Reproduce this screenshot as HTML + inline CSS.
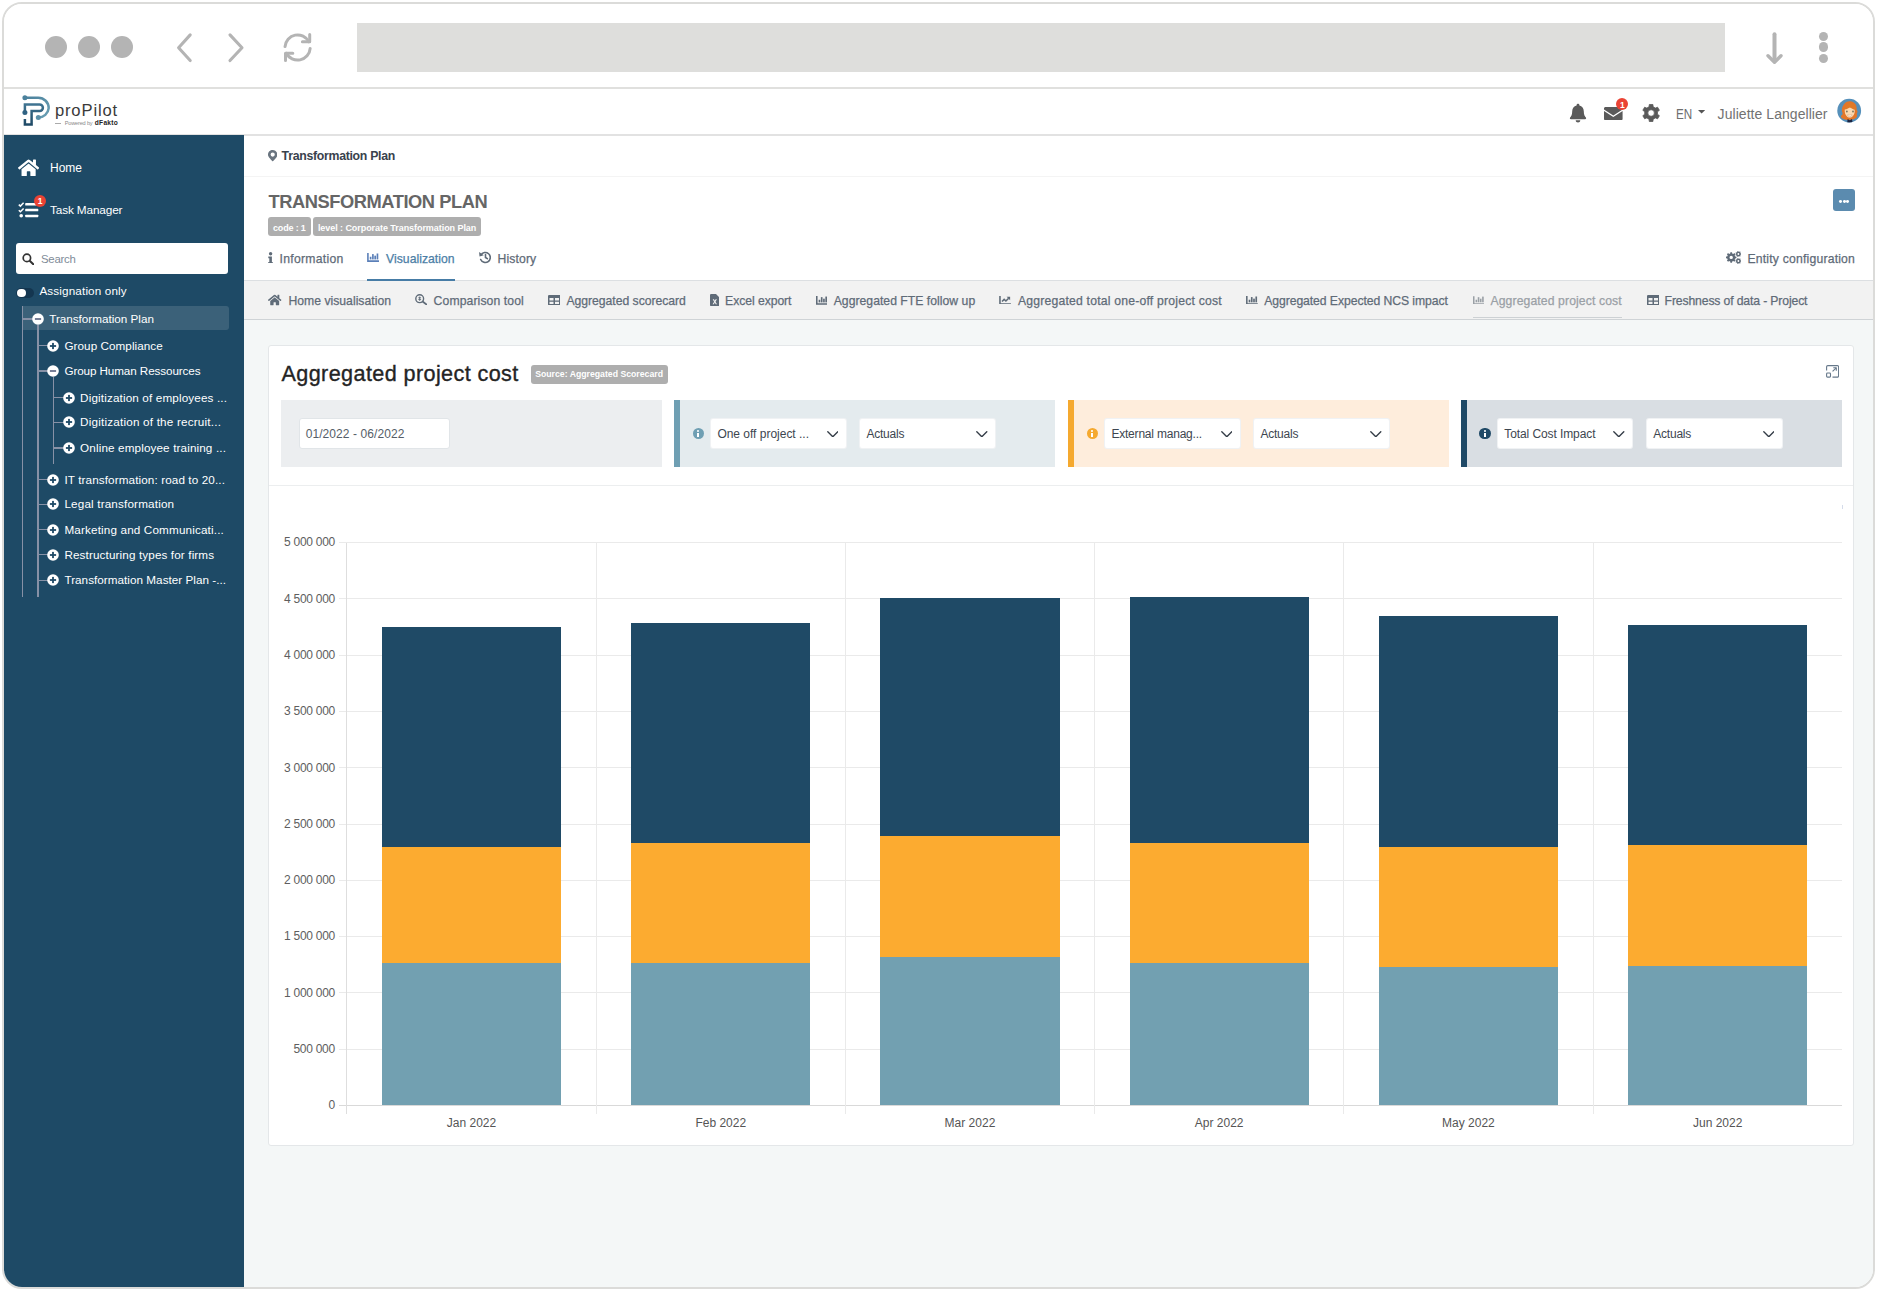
<!DOCTYPE html>
<html lang="en"><head><meta charset="utf-8"><title>proPilot - Aggregated project cost</title>
<style>
html,body{margin:0;padding:0;background:#fff;}
body{width:1879px;height:1293px;position:relative;overflow:hidden;font-family:"Liberation Sans", sans-serif;}
#f{position:absolute;left:2px;top:2px;width:1873px;height:1287px;box-sizing:border-box;border:2px solid #dbdbd9;border-radius:20px;overflow:hidden;background:#fff;}
#c{position:absolute;left:-4px;top:-4px;width:1879px;height:1293px;}
#c div,#c svg,#c span{position:absolute;display:block;}
#c span{white-space:nowrap;line-height:1;}
</style></head>
<body><div id="f"><div id="c">
<div style="left:0.00px;top:0.00px;width:1879.00px;height:87.00px;background:#fff"></div>
<div style="left:0.00px;top:87.00px;width:1879.00px;height:2.00px;background:#e0e0de"></div>
<div style="left:45.00px;top:36.00px;width:22.00px;height:22.00px;border-radius:50%;background:#b4b4b4"></div>
<div style="left:78.00px;top:36.00px;width:22.00px;height:22.00px;border-radius:50%;background:#b4b4b4"></div>
<div style="left:111.00px;top:36.00px;width:22.00px;height:22.00px;border-radius:50%;background:#b4b4b4"></div>
<svg style="left:170.00px;top:28.00px;" width="90.00" height="40.00" viewBox="170 28 90 40"><g fill="none" stroke="#b4b4b4" stroke-width="3.1" stroke-linecap="round" stroke-linejoin="round"><polyline points="190.2,34.9 178.6,47.7 190.2,60.5"/><polyline points="230,34.9 242,47.7 230,60.5"/></g></svg>
<svg style="left:278.00px;top:28.00px;" width="40.00" height="40.00" viewBox="278 28 40 40"><g fill="none" stroke="#b4b4b4" stroke-width="3" stroke-linecap="round" stroke-linejoin="round"><path d="M285.03 46.62 A12.6 12.6 0 0 1 308.83 41.78"/><polyline points="309.7,34.6 309.7,41.8 302.4,41.8"/><path d="M310.17 48.38 A12.6 12.6 0 0 1 286.37 53.22"/><polyline points="285.5,60.4 285.5,53.2 292.8,53.2"/></g></svg>
<div style="left:357.30px;top:23.00px;width:1367.70px;height:48.70px;background:#dededc"></div>
<svg style="left:1760.00px;top:28.00px;" width="30.00" height="40.00" viewBox="1760 28 30 40"><g fill="none" stroke="#b4b4b4" stroke-width="3.1" stroke-linecap="round" stroke-linejoin="round"><line x1="1774.5" y1="34.3" x2="1774.5" y2="61" stroke-width="4"/><polyline points="1768,55.8 1774.5,62.2 1781,55.8" stroke-width="3.4"/></g></svg>
<div style="left:1818.50px;top:31.50px;width:9.80px;height:9.80px;border-radius:50%;background:#b4b4b4"></div>
<div style="left:1818.50px;top:42.40px;width:9.80px;height:9.80px;border-radius:50%;background:#b4b4b4"></div>
<div style="left:1818.50px;top:53.50px;width:9.80px;height:9.80px;border-radius:50%;background:#b4b4b4"></div>
<div style="left:0.00px;top:89.00px;width:1879.00px;height:45.00px;background:#fff"></div>
<div style="left:0.00px;top:134.00px;width:1879.00px;height:1.60px;background:#e2e2e2"></div>
<svg style="left:20.00px;top:93.00px;" width="32.00" height="34.00" viewBox="20 93 32 34"><defs><linearGradient id="lg1" x1="0" y1="0" x2="0" y2="1"><stop offset="0" stop-color="#3f7391"/><stop offset="1" stop-color="#1f4a66"/></linearGradient><linearGradient id="lg2" x1="0" y1="0" x2="1" y2="1"><stop offset="0" stop-color="#4b819c"/><stop offset="1" stop-color="#6a9fb4"/></linearGradient></defs><g fill="none" stroke-width="2.5" stroke-linejoin="miter"><path d="M24.9 97.7 H38.3 A10.4 10.4 0 0 1 48.7 108.1 A10.4 10.4 0 0 1 38.3 117.5" stroke="url(#lg2)"/><path d="M24.9 112.4 V104.4 H39.6 A3.3 3.3 0 0 1 39.6 111 H31.6 V124.4 H24.9 V119" stroke="url(#lg1)"/></g><circle cx="24.9" cy="97.7" r="2.5" fill="#4b819c"/><circle cx="24.9" cy="112.4" r="2.5" fill="#2f6283"/><circle cx="38.3" cy="117.5" r="2.5" fill="#5a8fa8"/></svg>
<span id="t0" style="left:54.90px;top:102.50px;font-size:16.6px;color:#3a3a3a;font-weight:400;letter-spacing:0.862px;">proPilot</span>
<div style="left:54.60px;top:123.20px;width:6.70px;height:0.80px;background:#aaa"></div>
<span id="t1" style="left:64.80px;top:121.10px;font-size:5.6px;color:#8a8a8a;font-weight:400;letter-spacing:-0.194px;">Powered by</span>
<span id="t2" style="left:94.80px;top:120.10px;font-size:6.6px;color:#222;font-weight:700;letter-spacing:0.275px;">dFakto</span>
<svg style="left:1568.00px;top:103.00px;" width="20.00" height="21.00" viewBox="0 0 20 21"><path fill="#5a5a5a" d="M10 0.8c0.8 0 1.4 0.6 1.4 1.3v0.5c2.7 0.6 4.4 2.9 4.4 5.7 0 3.4 0.9 5 2.1 6.2 0.5 0.5 0.3 1.7-0.8 1.7H2.9c-1.1 0-1.3-1.2-0.8-1.7C3.3 13.3 4.2 11.700 4.200 8.300c0-2.800 1.700-5.100 4.400-5.700V2.100C8.600 1.400 9.200 0.800 10 0.800zM7.700 17.300h4.600c0 1.300-1 2.300-2.300 2.300s-2.300-1-2.300-2.300z"/></svg>
<svg style="left:1604.30px;top:106.60px;" width="18.60" height="13.40" viewBox="0 0 18.6 13.4"><path fill="#5a5a5a" d="M1.500 0h15.600c0.800 0 1.500 0.700 1.500 1.500v1.100L9.300 8.400 0 2.600V1.500C0 0.700 0.700 0 1.500 0zM0 4.100l9.300 5.800 9.300-5.800v7.800c0 0.800-0.700 1.500-1.500 1.500H1.500C0.700 13.400 0 12.700 0 11.900z"/></svg>
<div style="left:1616.20px;top:98.30px;width:12.20px;height:12.20px;border-radius:50%;background:#ea4334"></div>
<span id="t3" style="left:1622.30px;top:100.50px;font-size:8.5px;color:#fff;font-weight:700;transform:translateX(-50%);">1</span>
<svg style="left:1641.00px;top:103.00px;" width="20.00" height="20.00" viewBox="0 0 20 20"><path fill="#5a5a5a" fill-rule="evenodd" stroke="#5a5a5a" stroke-width="0.8" stroke-linejoin="round" d="M11.91 18.51 L8.29 18.51 L8.03 16.16 L5.80 14.88 L3.63 15.82 L1.83 12.69 L3.73 11.28 L3.73 8.72 L1.83 7.31 L3.63 4.18 L5.80 5.12 L8.03 3.84 L8.29 1.49 L11.91 1.49 L12.17 3.84 L14.40 5.12 L16.57 4.18 L18.37 7.31 L16.47 8.72 L16.47 11.28 L18.37 12.69 L16.57 15.82 L14.40 14.88 L12.17 16.16Z M13.40 10.00 A3.3 3.3 0 1 0 6.80 10.00 A3.3 3.3 0 1 0 13.40 10.00Z"/></svg>
<span id="t4" style="left:1676.10px;top:106.90px;font-size:14.2px;color:#6e6e6e;font-weight:400;transform-origin:0 0;transform:scaleX(0.823);">EN</span>
<svg style="left:1698.00px;top:110.10px;" width="7.20" height="3.60" viewBox="0 0 7.2 3.6"><path d="M0 0H7.2L3.6 3.6Z" fill="#555"/></svg>
<span id="t5" style="left:1717.60px;top:106.90px;font-size:14px;color:#727272;font-weight:400;letter-spacing:0.052px;">Juliette Langellier</span>
<svg style="left:1837.00px;top:98.00px;" width="25.00" height="25.00" viewBox="0 0 25 25"><defs><clipPath id="av"><circle cx="12.2" cy="12.7" r="11.9"/></clipPath></defs><circle cx="12.2" cy="12.7" r="11.9" fill="#5690ba"/><g clip-path="url(#av)"><path d="M7.600 5.400C9 3.800 11.200 3 13.200 3.200c2.200 0.200 4.300 1.300 5.300 3.100 1 1.700 1.300 3.700 1.200 5.600 0.700 0.600 1 1.500 0.700 2.400-0.200 0.700-0.700 1.200-0.600 1.900 0.100 0.800 0.500 1.500 0.200 2.300-0.400 1.200-1.600 2-2.800 2.600-2.800 1.200-6.200 1.300-9.200 0.500-1.300-0.400-2.800-0.900-3.700-2-0.500-0.700-0.500-1.600 0.100-2.200 0.500-0.500 1.100-0.900 1.200-1.600 0.200-1-0.600-1.900-0.700-2.900-0.300-2.600 0.700-5.500 2.700-7.500z" fill="#e2762a"/><path d="M8 10.500c2.200-1.200 6-1.400 9.500 0.200 0.500 2.200 0.300 4.500-0.800 6.300-0.900 1.500-2.300 2.800-4 2.800s-3-1.200-3.900-2.700c-1.100-1.900-1.400-4.500-0.800-6.600z" fill="#fbd9b0"/><path d="M7.500 11.500C8 8.500 9.800 6 12.800 5.300c2.500-0.500 4.800 1 5.500 3.400 0.300 1 0.200 2-0.100 3-2.100-0.200-4-1.100-5.300-2.700-0.600 1.200-2.800 2.300-5.400 2.500z" fill="#e07a28"/><path d="M10.200 24.800L10.600 21l2.200 1.300 2.200-1.300 0.500 3.800z" fill="#1c2441"/><path d="M10.600 16.800c1.400 0.500 3 0.500 4.400 0-0.400 1.300-1.300 2-2.200 2s-1.800-0.700-2.200-2z" fill="#fff" stroke="#c98a62" stroke-width="0.400"/><ellipse cx="9.900" cy="13.600" rx="0.650" ry="1" fill="#4b4a3c"/><ellipse cx="16" cy="13.600" rx="0.650" ry="1" fill="#4b4a3c"/></g></svg>
<div style="left:0.00px;top:135.30px;width:244.00px;height:1160.00px;background:#1e4a66"></div>
<svg style="left:18.00px;top:157.60px;" width="21.20" height="19.50" viewBox="0 0 576 512"><path fill="#fff" d="M280.37 148.26L96 300.11V464a16 16 0 0 0 16 16l112.06-.29a16 16 0 0 0 15.920-16V368a16 16 0 0 1 16-16h64a16 16 0 0 1 16 16v95.640a16 16 0 0 0 16 16.050L464 480a16 16 0 0 0 16-16V300L295.670 148.260a12.190 12.190 0 0 0-15.300 0zM571.600 251.470L488 182.560V44.050a12 12 0 0 0-12-12h-56a12 12 0 0 0-12 12v72.610L318.470 43a48 48 0 0 0-61 0L4.340 251.470a12 12 0 0 0-1.600 16.900l25.500 31A12 12 0 0 0 45.150 301l235.220-193.740a12.190 12.190 0 0 1 15.300 0L530.900 301a12 12 0 0 0 16.900-1.600l25.500-31a12 12 0 0 0-1.700-16.930z"/></svg>
<span id="t6" style="left:50.10px;top:162.10px;font-size:12px;color:#fff;font-weight:400;letter-spacing:-0.039px;">Home</span>
<svg style="left:18.40px;top:200.50px;" width="21.00" height="17.00" viewBox="0 0 21 17"><g fill="#fff"><rect x="7.200" y="2.050" width="13.100" height="2.500" rx="0.600"/><rect x="7.200" y="7.850" width="13.100" height="2.500" rx="0.600"/><rect x="7.200" y="13.650" width="13.100" height="2.500" rx="0.600"/><circle cx="3.200" cy="14.800" r="1.800"/></g><g fill="none" stroke="#fff" stroke-width="1.500"><polyline points="0.800,3.600 2.400,5.100 5.600,1.700"/><polyline points="0.800,9.300 2.400,10.800 5.600,7.400"/></g></svg>
<div style="left:33.80px;top:195.10px;width:12.40px;height:12.40px;border-radius:50%;background:#ea4334"></div>
<span id="t7" style="left:40.00px;top:197.40px;font-size:8.5px;color:#fff;font-weight:700;transform:translateX(-50%);">1</span>
<span id="t8" style="left:50.10px;top:205.30px;font-size:11.8px;color:#fff;font-weight:400;letter-spacing:-0.154px;">Task Manager</span>
<div style="left:15.90px;top:242.90px;width:212.60px;height:31.20px;background:#fff;border-radius:3px"></div>
<svg style="left:21.80px;top:252.80px;" width="12.40" height="12.40" viewBox="0 0 12.4 12.4"><circle cx="4.900" cy="4.900" r="3.700" fill="none" stroke="#333" stroke-width="1.700"/><line x1="7.700" y1="7.700" x2="11.300" y2="11.300" stroke="#333" stroke-width="2" stroke-linecap="round"/></svg>
<span id="t9" style="left:41.00px;top:254.40px;font-size:11.4px;color:#808b98;font-weight:400;letter-spacing:-0.239px;">Search</span>
<div style="left:16.10px;top:287.80px;width:17.70px;height:9.90px;border-radius:5px;background:#143650"></div>
<div style="left:17.30px;top:288.60px;width:8.40px;height:8.40px;border-radius:50%;background:#fff"></div>
<span id="t10" style="left:39.40px;top:285.40px;font-size:11.7px;color:#fff;font-weight:400;letter-spacing:0.145px;">Assignation only</span>
<div style="left:23.00px;top:305.60px;width:205.50px;height:24.20px;background:rgba(255,255,255,0.13);border-radius:0 3px 3px 0"></div>
<div style="left:21.60px;top:306.00px;width:1.40px;height:290.60px;background:#8791a6"></div>
<div style="left:37.20px;top:325.00px;width:1.40px;height:271.60px;background:#8791a6"></div>
<div style="left:52.90px;top:377.00px;width:1.40px;height:87.20px;background:#8791a6"></div>
<div style="left:22.30px;top:318.40px;width:10.50px;height:1.40px;background:#8791a6"></div>
<svg style="left:31.80px;top:313.10px;" width="12.00" height="12.00" viewBox="0 0 12 12"><circle cx="6" cy="6" r="5.800" fill="#fff"/><rect x="2.900" y="5.100" width="6.200" height="1.800" fill="#69728c"/></svg>
<span id="t11" style="left:49.20px;top:313.10px;font-size:11.7px;color:#fff;font-weight:400;letter-spacing:-0.001px;">Transformation Plan</span>
<div style="left:37.90px;top:345.00px;width:10.50px;height:1.40px;background:#8791a6"></div>
<svg style="left:47.40px;top:339.70px;" width="12.00" height="12.00" viewBox="0 0 12 12"><circle cx="6" cy="6" r="5.800" fill="#fff"/><rect x="2.900" y="5.100" width="6.200" height="1.800" fill="#1e4a66"/><rect x="5.100" y="2.900" width="1.800" height="6.200" fill="#1e4a66"/></svg>
<span id="t12" style="left:64.40px;top:339.70px;font-size:11.7px;color:#fff;font-weight:400;letter-spacing:0.063px;">Group Compliance</span>
<div style="left:37.90px;top:370.40px;width:10.50px;height:1.40px;background:#8791a6"></div>
<svg style="left:47.40px;top:365.10px;" width="12.00" height="12.00" viewBox="0 0 12 12"><circle cx="6" cy="6" r="5.800" fill="#fff"/><rect x="2.900" y="5.100" width="6.200" height="1.800" fill="#69728c"/></svg>
<span id="t13" style="left:64.40px;top:365.10px;font-size:11.7px;color:#fff;font-weight:400;letter-spacing:-0.104px;">Group Human Ressources</span>
<div style="left:53.60px;top:396.90px;width:10.50px;height:1.40px;background:#8791a6"></div>
<svg style="left:63.10px;top:391.60px;" width="12.00" height="12.00" viewBox="0 0 12 12"><circle cx="6" cy="6" r="5.800" fill="#fff"/><rect x="2.900" y="5.100" width="6.200" height="1.800" fill="#1e4a66"/><rect x="5.100" y="2.900" width="1.800" height="6.200" fill="#1e4a66"/></svg>
<span id="t14" style="left:80.10px;top:391.60px;font-size:11.7px;color:#fff;font-weight:400;letter-spacing:0.142px;">Digitization of employees ...</span>
<div style="left:53.60px;top:421.70px;width:10.50px;height:1.40px;background:#8791a6"></div>
<svg style="left:63.10px;top:416.40px;" width="12.00" height="12.00" viewBox="0 0 12 12"><circle cx="6" cy="6" r="5.800" fill="#fff"/><rect x="2.900" y="5.100" width="6.200" height="1.800" fill="#1e4a66"/><rect x="5.100" y="2.900" width="1.800" height="6.200" fill="#1e4a66"/></svg>
<span id="t15" style="left:80.10px;top:416.40px;font-size:11.7px;color:#fff;font-weight:400;letter-spacing:0.196px;">Digitization of the recruit...</span>
<div style="left:53.60px;top:447.40px;width:10.50px;height:1.40px;background:#8791a6"></div>
<svg style="left:63.10px;top:442.10px;" width="12.00" height="12.00" viewBox="0 0 12 12"><circle cx="6" cy="6" r="5.800" fill="#fff"/><rect x="2.900" y="5.100" width="6.200" height="1.800" fill="#1e4a66"/><rect x="5.100" y="2.900" width="1.800" height="6.200" fill="#1e4a66"/></svg>
<span id="t16" style="left:80.10px;top:442.10px;font-size:11.7px;color:#fff;font-weight:400;letter-spacing:0.130px;">Online employee training ...</span>
<div style="left:37.90px;top:478.80px;width:10.50px;height:1.40px;background:#8791a6"></div>
<svg style="left:47.40px;top:473.50px;" width="12.00" height="12.00" viewBox="0 0 12 12"><circle cx="6" cy="6" r="5.800" fill="#fff"/><rect x="2.900" y="5.100" width="6.200" height="1.800" fill="#1e4a66"/><rect x="5.100" y="2.900" width="1.800" height="6.200" fill="#1e4a66"/></svg>
<span id="t17" style="left:64.40px;top:473.50px;font-size:11.7px;color:#fff;font-weight:400;letter-spacing:0.113px;">IT transformation: road to 20...</span>
<div style="left:37.90px;top:503.50px;width:10.50px;height:1.40px;background:#8791a6"></div>
<svg style="left:47.40px;top:498.20px;" width="12.00" height="12.00" viewBox="0 0 12 12"><circle cx="6" cy="6" r="5.800" fill="#fff"/><rect x="2.900" y="5.100" width="6.200" height="1.800" fill="#1e4a66"/><rect x="5.100" y="2.900" width="1.800" height="6.200" fill="#1e4a66"/></svg>
<span id="t18" style="left:64.40px;top:498.20px;font-size:11.7px;color:#fff;font-weight:400;letter-spacing:0.166px;">Legal transformation</span>
<div style="left:37.90px;top:529.10px;width:10.50px;height:1.40px;background:#8791a6"></div>
<svg style="left:47.40px;top:523.80px;" width="12.00" height="12.00" viewBox="0 0 12 12"><circle cx="6" cy="6" r="5.800" fill="#fff"/><rect x="2.900" y="5.100" width="6.200" height="1.800" fill="#1e4a66"/><rect x="5.100" y="2.900" width="1.800" height="6.200" fill="#1e4a66"/></svg>
<span id="t19" style="left:64.40px;top:523.80px;font-size:11.7px;color:#fff;font-weight:400;letter-spacing:0.154px;">Marketing and Communicati...</span>
<div style="left:37.90px;top:554.10px;width:10.50px;height:1.40px;background:#8791a6"></div>
<svg style="left:47.40px;top:548.80px;" width="12.00" height="12.00" viewBox="0 0 12 12"><circle cx="6" cy="6" r="5.800" fill="#fff"/><rect x="2.900" y="5.100" width="6.200" height="1.800" fill="#1e4a66"/><rect x="5.100" y="2.900" width="1.800" height="6.200" fill="#1e4a66"/></svg>
<span id="t20" style="left:64.40px;top:548.80px;font-size:11.7px;color:#fff;font-weight:400;letter-spacing:0.127px;">Restructuring types for firms</span>
<div style="left:37.90px;top:579.50px;width:10.50px;height:1.40px;background:#8791a6"></div>
<svg style="left:47.40px;top:574.20px;" width="12.00" height="12.00" viewBox="0 0 12 12"><circle cx="6" cy="6" r="5.800" fill="#fff"/><rect x="2.900" y="5.100" width="6.200" height="1.800" fill="#1e4a66"/><rect x="5.100" y="2.900" width="1.800" height="6.200" fill="#1e4a66"/></svg>
<span id="t21" style="left:64.40px;top:574.20px;font-size:11.7px;color:#fff;font-weight:400;letter-spacing:0.035px;">Transformation Master Plan -...</span>
<div style="left:244.00px;top:135.60px;width:1640.00px;height:145.00px;background:#fff"></div>
<div style="left:244.00px;top:175.80px;width:1640.00px;height:1.00px;background:#f4f4f4"></div>
<svg style="left:268.00px;top:150.20px;" width="9.40" height="11.40" viewBox="0 0 9.4 11.4"><path fill="#69747f" fill-rule="evenodd" d="M4.700 0C2.100 0 0 2.100 0 4.600c0 1.900 0.700 2.500 4.200 6.500 0.300 0.300 0.700 0.300 1 0C8.700 7.100 9.400 6.500 9.400 4.600 9.400 2.100 7.300 0 4.700 0zM4.700 2.500a2.100 2.100 0 1 1 0 4.200 2.100 2.100 0 0 1 0-4.200z"/></svg>
<span id="t22" style="left:281.60px;top:150.20px;font-size:12.3px;color:#39424d;font-weight:700;letter-spacing:-0.289px;">Transformation Plan</span>
<span id="t23" style="left:268.60px;top:193.10px;font-size:18.3px;color:#666;font-weight:700;letter-spacing:-0.452px;">TRANSFORMATION PLAN</span>
<div style="left:268.00px;top:217.30px;width:42.60px;height:19.10px;background:#aeaeae;border-radius:3px"></div>
<span id="t24" style="left:273.00px;top:223.50px;font-size:9px;color:#fff;font-weight:700;letter-spacing:-0.174px;">code : 1</span>
<div style="left:313.10px;top:217.30px;width:167.60px;height:19.10px;background:#aeaeae;border-radius:3px"></div>
<span id="t25" style="left:317.90px;top:223.50px;font-size:9px;color:#fff;font-weight:700;letter-spacing:-0.060px;">level : Corporate Transformation Plan</span>
<div style="left:1832.90px;top:189.20px;width:22.10px;height:21.80px;background:#5b8baf;border-radius:3px"></div>
<div style="left:1839.05px;top:199.65px;width:2.90px;height:2.90px;background:#fff;border-radius:50%"></div>
<div style="left:1842.65px;top:199.65px;width:2.90px;height:2.90px;background:#fff;border-radius:50%"></div>
<div style="left:1846.25px;top:199.65px;width:2.90px;height:2.90px;background:#fff;border-radius:50%"></div>
<svg style="left:268.00px;top:251.60px;" width="5.20" height="11.90" viewBox="0 0 5.2 11.9"><g fill="#5f6b78"><circle cx="2.600" cy="1.700" r="1.700"/><path d="M0.300 4.600H3.900V10.200H5.200V11.900H0V10.200H1.300V6.300H0.300Z"/></g></svg>
<span id="t26" style="left:279.50px;top:252.80px;font-size:12.2px;color:#5f6b78;font-weight:400;letter-spacing:0.283px;-webkit-text-stroke:0.25px #5f6b78;">Information</span>
<svg style="left:367.30px;top:253.00px;" width="12.10" height="8.90" viewBox="0 0 12 9"><g fill="#5a7fb8"><path d="M0 0H1.600V7.400H12V9H0Z"/><rect x="2.700" y="3.800" width="1.700" height="2.700"/><rect x="5" y="1.100" width="1.700" height="5.400"/><rect x="7.300" y="2.700" width="1.700" height="3.800"/><rect x="9.600" y="0.500" width="1.700" height="6"/></g></svg>
<span id="t27" style="left:386.10px;top:252.80px;font-size:12.2px;color:#4c7ea6;font-weight:400;letter-spacing:0.015px;-webkit-text-stroke:0.25px #4c7ea6;">Visualization</span>
<div style="left:367.40px;top:278.60px;width:87.30px;height:2.00px;background:#467ca6"></div>
<svg style="left:479.00px;top:251.40px;" width="12.40" height="12.40" viewBox="0 0 12.4 12.4"><g fill="none" stroke="#5f6b78" stroke-width="1.600" stroke-linecap="round"><path d="M1.900 4.100A5 5 0 1 1 1.700 8.500"/><polyline points="6.500,3.600 6.500,6.500 8.300,7.700"/></g><path d="M0.100 0.900L0.500 5.400L4.800 4.200Z" fill="#5f6b78"/></svg>
<span id="t28" style="left:497.60px;top:252.80px;font-size:12.2px;color:#5f6b78;font-weight:400;letter-spacing:0.113px;-webkit-text-stroke:0.25px #5f6b78;">History</span>
<svg style="left:1725.60px;top:251.00px;" width="15.40" height="13.00" viewBox="0 0 15.4 13"><path fill="#5f6b78" fill-rule="evenodd" d="M10.43 5.57 L10.43 7.23 L9.18 7.39 L8.71 8.51 L9.49 9.52 L8.32 10.69 L7.31 9.91 L6.19 10.38 L6.03 11.63 L4.37 11.63 L4.21 10.38 L3.09 9.91 L2.08 10.69 L0.91 9.52 L1.69 8.51 L1.22 7.39 L-0.03 7.23 L-0.03 5.57 L1.22 5.41 L1.69 4.29 L0.91 3.28 L2.08 2.11 L3.09 2.89 L4.21 2.42 L4.37 1.17 L6.03 1.17 L6.19 2.42 L7.31 2.89 L8.32 2.11 L9.49 3.28 L8.71 4.29 L9.18 5.41Z M6.90 6.40 A1.7 1.7 0 1 0 3.50 6.40 A1.7 1.7 0 1 0 6.90 6.40Z M15.35 2.46 L15.35 3.54 L14.61 3.63 L14.27 4.34 L14.66 4.97 L13.82 5.64 L13.28 5.12 L12.52 5.30 L12.27 6.00 L11.22 5.76 L11.29 5.02 L10.68 4.53 L9.97 4.76 L9.51 3.80 L10.13 3.39 L10.13 2.61 L9.51 2.20 L9.97 1.24 L10.68 1.47 L11.29 0.98 L11.22 0.24 L12.27 0.00 L12.52 0.70 L13.28 0.88 L13.82 0.36 L14.66 1.03 L14.27 1.66 L14.61 2.37Z M13.30 3.00 A0.9 0.9 0 1 0 11.50 3.00 A0.9 0.9 0 1 0 13.30 3.00Z M15.35 9.46 L15.35 10.54 L14.61 10.63 L14.27 11.34 L14.66 11.97 L13.82 12.64 L13.28 12.12 L12.52 12.30 L12.27 13.00 L11.22 12.76 L11.29 12.02 L10.68 11.53 L9.97 11.76 L9.51 10.80 L10.13 10.39 L10.13 9.61 L9.51 9.20 L9.97 8.24 L10.68 8.47 L11.29 7.98 L11.22 7.24 L12.27 7.00 L12.52 7.70 L13.28 7.88 L13.82 7.36 L14.66 8.03 L14.27 8.66 L14.61 9.37Z M13.30 10.00 A0.9 0.9 0 1 0 11.50 10.00 A0.9 0.9 0 1 0 13.30 10.00Z"/></svg>
<span id="t29" style="left:1747.40px;top:252.80px;font-size:12.2px;color:#5f6b78;font-weight:400;letter-spacing:0.202px;-webkit-text-stroke:0.25px #5f6b78;">Entity configuration</span>
<div style="left:244.00px;top:280.60px;width:1640.00px;height:38.40px;background:#f2f2f2"></div>
<div style="left:244.00px;top:280.00px;width:1640.00px;height:1.30px;background:#dcdfe2"></div>
<div style="left:367.40px;top:278.60px;width:87.30px;height:2.00px;background:#467ca6"></div>
<div style="left:244.00px;top:318.60px;width:1640.00px;height:1.50px;background:#cfd3d6"></div>
<div style="left:244.00px;top:320.10px;width:1640.00px;height:975.00px;background:#f4f7f7"></div>
<svg style="left:268.30px;top:294.15px;" width="13.40" height="11.90" viewBox="0 0 576 512"><path fill="#5f6b78" d="M280.37 148.26L96 300.11V464a16 16 0 0 0 16 16l112.06-.29a16 16 0 0 0 15.920-16V368a16 16 0 0 1 16-16h64a16 16 0 0 1 16 16v95.640a16 16 0 0 0 16 16.050L464 480a16 16 0 0 0 16-16V300L295.670 148.260a12.190 12.190 0 0 0-15.300 0zM571.600 251.470L488 182.560V44.050a12 12 0 0 0-12-12h-56a12 12 0 0 0-12 12v72.610L318.470 43a48 48 0 0 0-61 0L4.340 251.470a12 12 0 0 0-1.600 16.900l25.500 31A12 12 0 0 0 45.150 301l235.220-193.740a12.190 12.190 0 0 1 15.300 0L530.900 301a12 12 0 0 0 16.900-1.600l25.500-31a12 12 0 0 0-1.700-16.930z"/></svg>
<span id="t30" style="left:288.40px;top:294.60px;font-size:12.2px;color:#5f6b78;font-weight:400;letter-spacing:0.018px;-webkit-text-stroke:0.25px #5f6b78;">Home visualisation</span>
<svg style="left:414.90px;top:294.30px;" width="12.40" height="11.20" viewBox="0 0 12.4 11.2"><circle cx="4.700" cy="4.700" r="3.900" fill="none" stroke="#5f6b78" stroke-width="1.400"/><line x1="7.600" y1="7.500" x2="11.400" y2="10.400" stroke="#5f6b78" stroke-width="1.800" stroke-linecap="round"/><rect x="4.200" y="2.600" width="1" height="4.200" fill="#5f6b78"/><rect x="3.300" y="3.400" width="2.800" height="0.800" fill="#5f6b78"/><rect x="3.300" y="5.200" width="2.800" height="0.800" fill="#5f6b78"/></svg>
<span id="t31" style="left:433.60px;top:294.60px;font-size:12.2px;color:#5f6b78;font-weight:400;letter-spacing:0.104px;-webkit-text-stroke:0.25px #5f6b78;">Comparison tool</span>
<svg style="left:547.80px;top:294.80px;" width="12.50" height="10.40" viewBox="0 0 12.5 10.4"><path fill="#5f6b78" fill-rule="evenodd" d="M1.100 0H11.400A1.100 1.100 0 0 1 12.500 1.100V9.300A1.100 1.100 0 0 1 11.400 10.400H1.100A1.100 1.100 0 0 1 0 9.300V1.100A1.100 1.100 0 0 1 1.100 0ZM1.500 3V5.500H5.500V3ZM7 3V5.500H11V3ZM1.500 6.800V9H5.500V6.800ZM7 6.800V9H11V6.800Z"/></svg>
<span id="t32" style="left:566.40px;top:294.60px;font-size:12.2px;color:#5f6b78;font-weight:400;letter-spacing:-0.022px;-webkit-text-stroke:0.25px #5f6b78;">Aggregated scorecard</span>
<svg style="left:709.80px;top:293.80px;" width="9.60" height="12.20" viewBox="0 0 9.6 12.2"><path fill="#5f6b78" fill-rule="evenodd" d="M1.100 0H6L9.600 3.600V11.100A1.100 1.100 0 0 1 8.500 12.200H1.100A1.100 1.100 0 0 1 0 11.100V1.100A1.100 1.100 0 0 1 1.100 0ZM2.700 5.200L4.100 7.700L2.600 10.300H3.900L4.800 8.600L5.700 10.300H7L5.500 7.700L6.900 5.200H5.600L4.800 6.800L4 5.200Z"/></svg>
<span id="t33" style="left:725.10px;top:294.60px;font-size:12.2px;color:#5f6b78;font-weight:400;letter-spacing:-0.060px;-webkit-text-stroke:0.25px #5f6b78;">Excel export</span>
<svg style="left:815.70px;top:295.70px;" width="11.70" height="8.90" viewBox="0 0 12 9"><g fill="#5f6b78"><path d="M0 0H1.600V7.400H12V9H0Z"/><rect x="2.700" y="3.800" width="1.700" height="2.700"/><rect x="5" y="1.100" width="1.700" height="5.400"/><rect x="7.300" y="2.700" width="1.700" height="3.800"/><rect x="9.600" y="0.500" width="1.700" height="6"/></g></svg>
<span id="t34" style="left:833.70px;top:294.60px;font-size:12.2px;color:#5f6b78;font-weight:400;letter-spacing:0.025px;-webkit-text-stroke:0.25px #5f6b78;">Aggregated FTE follow up</span>
<svg style="left:998.80px;top:295.60px;" width="12.10" height="8.80" viewBox="0 0 12 9"><path fill="#5f6b78" d="M0 0H1.600V7.400H12V9H0Z"/><polyline points="2.900,5.700 5.100,3.500 6.900,5.100 9.700,2.300" fill="none" stroke="#5f6b78" stroke-width="1.600"/><path d="M7.600 0.800H11.200V4.400Z" fill="#5f6b78"/></svg>
<span id="t35" style="left:1017.90px;top:294.60px;font-size:12.2px;color:#5f6b78;font-weight:400;letter-spacing:0.209px;-webkit-text-stroke:0.25px #5f6b78;">Aggregated total one-off project cost</span>
<svg style="left:1245.80px;top:295.60px;" width="11.80" height="8.80" viewBox="0 0 12 9"><g fill="#5f6b78"><path d="M0 0H1.600V7.400H12V9H0Z"/><rect x="2.700" y="3.800" width="1.700" height="2.700"/><rect x="5" y="1.100" width="1.700" height="5.400"/><rect x="7.300" y="2.700" width="1.700" height="3.800"/><rect x="9.600" y="0.500" width="1.700" height="6"/></g></svg>
<span id="t36" style="left:1264.20px;top:294.60px;font-size:12.2px;color:#5f6b78;font-weight:400;letter-spacing:-0.066px;-webkit-text-stroke:0.25px #5f6b78;">Aggregated Expected NCS impact</span>
<svg style="left:1472.50px;top:295.60px;" width="11.40" height="8.80" viewBox="0 0 12 9"><g fill="#9aa0a6"><path d="M0 0H1.600V7.400H12V9H0Z"/><rect x="2.700" y="3.800" width="1.700" height="2.700"/><rect x="5" y="1.100" width="1.700" height="5.400"/><rect x="7.300" y="2.700" width="1.700" height="3.800"/><rect x="9.600" y="0.500" width="1.700" height="6"/></g></svg>
<span id="t37" style="left:1490.50px;top:294.60px;font-size:12.2px;color:#9aa0a6;font-weight:400;letter-spacing:0.108px;-webkit-text-stroke:0.25px #9aa0a6;">Aggregated project cost</span>
<div style="left:1472.50px;top:317.20px;width:149.10px;height:1.20px;background:#cdd1d4"></div>
<svg style="left:1646.60px;top:294.80px;" width="12.50" height="10.40" viewBox="0 0 12.5 10.4"><path fill="#5f6b78" fill-rule="evenodd" d="M1.100 0H11.400A1.100 1.100 0 0 1 12.500 1.100V9.300A1.100 1.100 0 0 1 11.400 10.400H1.100A1.100 1.100 0 0 1 0 9.300V1.100A1.100 1.100 0 0 1 1.100 0ZM1.500 3V5.500H5.500V3ZM7 3V5.500H11V3ZM1.500 6.800V9H5.500V6.800ZM7 6.800V9H11V6.800Z"/></svg>
<span id="t38" style="left:1664.60px;top:294.60px;font-size:12.2px;color:#5f6b78;font-weight:400;letter-spacing:-0.132px;-webkit-text-stroke:0.25px #5f6b78;">Freshness of data - Project</span>
<div style="left:268.40px;top:345.30px;width:1586.10px;height:800.80px;background:#fff;border:1px solid #e4e7e9;border-radius:3px;box-sizing:border-box"></div>
<span id="t39" style="left:281.50px;top:363.00px;font-size:21.6px;color:#242424;font-weight:400;letter-spacing:0.396px;-webkit-text-stroke:0.35px #242424;">Aggregated project cost</span>
<div style="left:530.50px;top:364.50px;width:137.10px;height:19.40px;background:#aeaeae;border-radius:3px"></div>
<span id="t40" style="left:535.20px;top:370.40px;font-size:8.7px;color:#fff;font-weight:700;letter-spacing:0.006px;">Source: Aggregated Scorecard</span>
<svg style="left:1826.20px;top:365.20px;" width="13.20" height="12.70" viewBox="0 0 13.2 12.7"><g fill="none" stroke="#66788a" stroke-width="1.100" stroke-linejoin="round"><path d="M0.600 5.600V1.800A1.200 1.200 0 0 1 1.800 0.600H11.400A1.200 1.200 0 0 1 12.600 1.800V10.900A1.200 1.200 0 0 1 11.400 12.100H6.500"/><polyline points="6.600,6.300 10.200,2.900"/><polyline points="7.300,2.800 10.300,2.800 10.300,5.700"/><rect x="0.600" y="8" width="3.900" height="4.100" rx="0.900"/></g></svg>
<div style="left:280.80px;top:399.60px;width:381.30px;height:67.70px;background:#eceef0"></div>
<div style="left:299.00px;top:418.10px;width:150.70px;height:31.00px;background:#fff;border:1px solid #e1e5e8;border-radius:3px;box-sizing:border-box"></div>
<span id="t41" style="left:305.70px;top:427.90px;font-size:12px;color:#555e68;font-weight:400;letter-spacing:0.080px;">01/2022 - 06/2022</span>
<div style="left:674.20px;top:399.60px;width:381.30px;height:67.70px;background:#e4ebee"></div>
<div style="left:674.20px;top:399.60px;width:6.20px;height:67.70px;background:#6f9fb3"></div>
<div style="left:692.50px;top:427.90px;width:11.60px;height:11.60px;background:#6f9fb3;border-radius:50%"></div>
<div style="left:697.40px;top:429.80px;width:1.80px;height:1.80px;background:#fff;border-radius:50%"></div>
<div style="left:697.40px;top:432.50px;width:1.80px;height:4.60px;background:#fff"></div>
<div style="left:710.30px;top:418.20px;width:136.30px;height:30.50px;background:#fff;border-radius:3px;box-sizing:border-box;border:1px solid rgba(40,70,100,0.07)"></div>
<span id="t42" style="left:717.40px;top:427.90px;font-size:12px;color:#3d4650;font-weight:400;letter-spacing:-0.013px;">One off project ...</span>
<svg style="left:826.50px;top:430.60px;" width="11.60" height="6.60" viewBox="0 0 11.6 6.6"><polyline points="0.800,0.800 5.800,5.800 10.800,0.800" fill="none" stroke="#333c46" stroke-width="1.350" stroke-linecap="round" stroke-linejoin="round"/></svg>
<div style="left:859.40px;top:418.20px;width:137.00px;height:30.50px;background:#fff;border-radius:3px;box-sizing:border-box;border:1px solid rgba(40,70,100,0.07)"></div>
<span id="t43" style="left:866.40px;top:427.90px;font-size:12px;color:#3d4650;font-weight:400;letter-spacing:-0.227px;">Actuals</span>
<svg style="left:976.00px;top:430.60px;" width="11.60" height="6.60" viewBox="0 0 11.6 6.6"><polyline points="0.800,0.800 5.800,5.800 10.800,0.800" fill="none" stroke="#333c46" stroke-width="1.350" stroke-linecap="round" stroke-linejoin="round"/></svg>
<div style="left:1068.20px;top:399.60px;width:381.30px;height:67.70px;background:#feeddc"></div>
<div style="left:1068.20px;top:399.60px;width:6.20px;height:67.70px;background:#f5a92f"></div>
<div style="left:1086.50px;top:427.90px;width:11.60px;height:11.60px;background:#f5a92f;border-radius:50%"></div>
<div style="left:1091.40px;top:429.80px;width:1.80px;height:1.80px;background:#fff;border-radius:50%"></div>
<div style="left:1091.40px;top:432.50px;width:1.80px;height:4.60px;background:#fff"></div>
<div style="left:1104.30px;top:418.20px;width:136.30px;height:30.50px;background:#fff;border-radius:3px;box-sizing:border-box;border:1px solid rgba(40,70,100,0.07)"></div>
<span id="t44" style="left:1111.40px;top:427.90px;font-size:12px;color:#3d4650;font-weight:400;letter-spacing:-0.204px;">External manag...</span>
<svg style="left:1220.50px;top:430.60px;" width="11.60" height="6.60" viewBox="0 0 11.6 6.6"><polyline points="0.800,0.800 5.800,5.800 10.800,0.800" fill="none" stroke="#333c46" stroke-width="1.350" stroke-linecap="round" stroke-linejoin="round"/></svg>
<div style="left:1253.40px;top:418.20px;width:137.00px;height:30.50px;background:#fff;border-radius:3px;box-sizing:border-box;border:1px solid rgba(40,70,100,0.07)"></div>
<span id="t45" style="left:1260.40px;top:427.90px;font-size:12px;color:#3d4650;font-weight:400;letter-spacing:-0.227px;">Actuals</span>
<svg style="left:1370.00px;top:430.60px;" width="11.60" height="6.60" viewBox="0 0 11.6 6.6"><polyline points="0.800,0.800 5.800,5.800 10.800,0.800" fill="none" stroke="#333c46" stroke-width="1.350" stroke-linecap="round" stroke-linejoin="round"/></svg>
<div style="left:1461.10px;top:399.60px;width:381.30px;height:67.70px;background:#d9dee3"></div>
<div style="left:1461.10px;top:399.60px;width:6.20px;height:67.70px;background:#1f4966"></div>
<div style="left:1479.40px;top:427.90px;width:11.60px;height:11.60px;background:#1f4966;border-radius:50%"></div>
<div style="left:1484.30px;top:429.80px;width:1.80px;height:1.80px;background:#fff;border-radius:50%"></div>
<div style="left:1484.30px;top:432.50px;width:1.80px;height:4.60px;background:#fff"></div>
<div style="left:1497.20px;top:418.20px;width:136.30px;height:30.50px;background:#fff;border-radius:3px;box-sizing:border-box;border:1px solid rgba(40,70,100,0.07)"></div>
<span id="t46" style="left:1504.30px;top:427.90px;font-size:12px;color:#3d4650;font-weight:400;letter-spacing:-0.094px;">Total Cost Impact</span>
<svg style="left:1613.40px;top:430.60px;" width="11.60" height="6.60" viewBox="0 0 11.6 6.6"><polyline points="0.800,0.800 5.800,5.800 10.800,0.800" fill="none" stroke="#333c46" stroke-width="1.350" stroke-linecap="round" stroke-linejoin="round"/></svg>
<div style="left:1646.30px;top:418.20px;width:137.00px;height:30.50px;background:#fff;border-radius:3px;box-sizing:border-box;border:1px solid rgba(40,70,100,0.07)"></div>
<span id="t47" style="left:1653.30px;top:427.90px;font-size:12px;color:#3d4650;font-weight:400;letter-spacing:-0.227px;">Actuals</span>
<svg style="left:1762.90px;top:430.60px;" width="11.60" height="6.60" viewBox="0 0 11.6 6.6"><polyline points="0.800,0.800 5.800,5.800 10.800,0.800" fill="none" stroke="#333c46" stroke-width="1.350" stroke-linecap="round" stroke-linejoin="round"/></svg>
<div style="left:269.40px;top:485.00px;width:1584.10px;height:1.00px;background:#eceeef"></div>
<div style="left:338.80px;top:1104.90px;width:1503.50px;height:1.00px;background:#d9d9d9"></div>
<span id="t48" style="left:335.21px;top:1099.20px;font-size:12px;color:#5e5e5e;font-weight:400;letter-spacing:0.013px;transform:translateX(-100%);">0</span>
<div style="left:338.80px;top:1048.62px;width:1503.50px;height:1.00px;background:#eaeaea"></div>
<span id="t49" style="left:334.93px;top:1042.92px;font-size:12px;color:#5e5e5e;font-weight:400;letter-spacing:-0.265px;transform:translateX(-100%);">500 000</span>
<div style="left:338.80px;top:992.35px;width:1503.50px;height:1.00px;background:#eaeaea"></div>
<span id="t50" style="left:334.91px;top:986.65px;font-size:12px;color:#5e5e5e;font-weight:400;letter-spacing:-0.286px;transform:translateX(-100%);">1 000 000</span>
<div style="left:338.80px;top:936.08px;width:1503.50px;height:1.00px;background:#eaeaea"></div>
<span id="t51" style="left:334.91px;top:930.38px;font-size:12px;color:#5e5e5e;font-weight:400;letter-spacing:-0.286px;transform:translateX(-100%);">1 500 000</span>
<div style="left:338.80px;top:879.80px;width:1503.50px;height:1.00px;background:#eaeaea"></div>
<span id="t52" style="left:334.91px;top:874.10px;font-size:12px;color:#5e5e5e;font-weight:400;letter-spacing:-0.286px;transform:translateX(-100%);">2 000 000</span>
<div style="left:338.80px;top:823.53px;width:1503.50px;height:1.00px;background:#eaeaea"></div>
<span id="t53" style="left:334.91px;top:817.83px;font-size:12px;color:#5e5e5e;font-weight:400;letter-spacing:-0.286px;transform:translateX(-100%);">2 500 000</span>
<div style="left:338.80px;top:767.25px;width:1503.50px;height:1.00px;background:#eaeaea"></div>
<span id="t54" style="left:334.91px;top:761.55px;font-size:12px;color:#5e5e5e;font-weight:400;letter-spacing:-0.286px;transform:translateX(-100%);">3 000 000</span>
<div style="left:338.80px;top:710.98px;width:1503.50px;height:1.00px;background:#eaeaea"></div>
<span id="t55" style="left:334.91px;top:705.28px;font-size:12px;color:#5e5e5e;font-weight:400;letter-spacing:-0.286px;transform:translateX(-100%);">3 500 000</span>
<div style="left:338.80px;top:654.70px;width:1503.50px;height:1.00px;background:#eaeaea"></div>
<span id="t56" style="left:334.91px;top:649.00px;font-size:12px;color:#5e5e5e;font-weight:400;letter-spacing:-0.286px;transform:translateX(-100%);">4 000 000</span>
<div style="left:338.80px;top:598.43px;width:1503.50px;height:1.00px;background:#eaeaea"></div>
<span id="t57" style="left:334.91px;top:592.73px;font-size:12px;color:#5e5e5e;font-weight:400;letter-spacing:-0.286px;transform:translateX(-100%);">4 500 000</span>
<div style="left:338.80px;top:542.15px;width:1503.50px;height:1.00px;background:#eaeaea"></div>
<span id="t58" style="left:334.91px;top:536.45px;font-size:12px;color:#5e5e5e;font-weight:400;letter-spacing:-0.286px;transform:translateX(-100%);">5 000 000</span>
<div style="left:346.40px;top:542.65px;width:1.00px;height:571.25px;background:#dedede"></div>
<div style="left:595.63px;top:542.65px;width:1.00px;height:571.25px;background:#eaeaea"></div>
<div style="left:844.86px;top:542.65px;width:1.00px;height:571.25px;background:#eaeaea"></div>
<div style="left:1094.09px;top:542.65px;width:1.00px;height:571.25px;background:#eaeaea"></div>
<div style="left:1343.32px;top:542.65px;width:1.00px;height:571.25px;background:#eaeaea"></div>
<div style="left:1592.55px;top:542.65px;width:1.00px;height:571.25px;background:#eaeaea"></div>
<div style="left:381.91px;top:627.30px;width:179.20px;height:478.10px;background:#1f4a66"></div>
<div style="left:381.91px;top:846.90px;width:179.20px;height:258.50px;background:#fcab30"></div>
<div style="left:381.91px;top:962.60px;width:179.20px;height:142.80px;background:#72a0b1"></div>
<span id="t59" style="left:471.51px;top:1117.20px;font-size:12px;color:#555;font-weight:400;transform:translateX(-50%);">Jan 2022</span>
<div style="left:631.14px;top:622.90px;width:179.20px;height:482.50px;background:#1f4a66"></div>
<div style="left:631.14px;top:842.50px;width:179.20px;height:262.90px;background:#fcab30"></div>
<div style="left:631.14px;top:963.40px;width:179.20px;height:142.00px;background:#72a0b1"></div>
<span id="t60" style="left:720.74px;top:1117.20px;font-size:12px;color:#555;font-weight:400;transform:translateX(-50%);">Feb 2022</span>
<div style="left:880.37px;top:597.80px;width:179.20px;height:507.60px;background:#1f4a66"></div>
<div style="left:880.37px;top:836.00px;width:179.20px;height:269.40px;background:#fcab30"></div>
<div style="left:880.37px;top:956.60px;width:179.20px;height:148.80px;background:#72a0b1"></div>
<span id="t61" style="left:969.97px;top:1117.20px;font-size:12px;color:#555;font-weight:400;transform:translateX(-50%);">Mar 2022</span>
<div style="left:1129.61px;top:597.40px;width:179.20px;height:508.00px;background:#1f4a66"></div>
<div style="left:1129.61px;top:842.50px;width:179.20px;height:262.90px;background:#fcab30"></div>
<div style="left:1129.61px;top:963.40px;width:179.20px;height:142.00px;background:#72a0b1"></div>
<span id="t62" style="left:1219.20px;top:1117.20px;font-size:12px;color:#555;font-weight:400;transform:translateX(-50%);">Apr 2022</span>
<div style="left:1378.84px;top:616.40px;width:179.20px;height:489.00px;background:#1f4a66"></div>
<div style="left:1378.84px;top:847.30px;width:179.20px;height:258.10px;background:#fcab30"></div>
<div style="left:1378.84px;top:967.10px;width:179.20px;height:138.30px;background:#72a0b1"></div>
<span id="t63" style="left:1468.43px;top:1117.20px;font-size:12px;color:#555;font-weight:400;transform:translateX(-50%);">May 2022</span>
<div style="left:1628.07px;top:624.90px;width:179.20px;height:480.50px;background:#1f4a66"></div>
<div style="left:1628.07px;top:844.90px;width:179.20px;height:260.50px;background:#fcab30"></div>
<div style="left:1628.07px;top:965.50px;width:179.20px;height:139.90px;background:#72a0b1"></div>
<span id="t64" style="left:1717.66px;top:1117.20px;font-size:12px;color:#555;font-weight:400;transform:translateX(-50%);">Jun 2022</span>
<div style="left:1841.80px;top:504.60px;width:1.20px;height:4.00px;background:#d5dcea"></div>
</div></div></body></html>
